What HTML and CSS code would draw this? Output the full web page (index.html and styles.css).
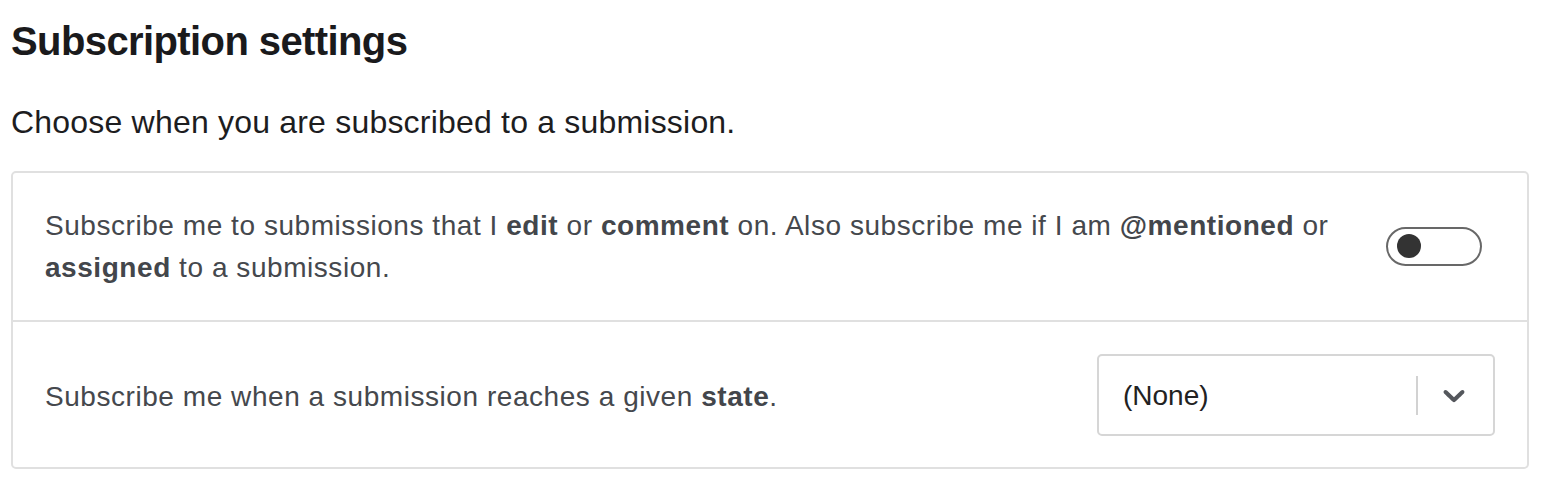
FILE: index.html
```html
<!DOCTYPE html>
<html>
  <head>
    <link rel="stylesheet" href="styles.css">
  </head>
  <body>
    <div class="page">
      <h1 class="title">Subscription settings</h1>
      <p class="intro">Choose when you are subscribed to a submission.</p>

      <div class="card">
        <div class="row">
          <div class="row-text">
            Subscribe me to submissions that I <b>edit</b> or <b>comment</b> on. Also subscribe me if I am <b>@mentioned</b> or <b>assigned</b> to a submission.
          </div>
          <div class="toggle">
            <span class="knob"></span>
          </div>
        </div>
        <div class="row">
          <div class="row-text row-text-low">
            Subscribe me when a submission reaches a given <b>state</b>.
          </div>
          <div class="select">
            <div class="select-value">(None)</div>
            <span class="select-sep"></span>
            <div class="select-arrow">
              <svg width="36" height="36" viewBox="0 0 20 20">
                <path d="M4.516 7.548c0.436-0.446 1.043-0.481 1.576 0l3.908 3.747 3.908-3.747c0.533-0.481 1.141-0.446 1.574 0 0.436 0.445 0.408 1.197 0 1.615-0.406 0.418-4.695 4.502-4.695 4.502-0.217 0.223-0.502 0.335-0.787 0.335s-0.57-0.112-0.789-0.335c0 0-4.287-4.084-4.695-4.502s-0.436-1.17 0-1.615z" fill="#54575c"/>
              </svg>
            </div>
          </div>
        </div>
      </div>
    </div>
  </body>
</html>
```

FILE: styles.css
```css
* {box-sizing: border-box;}

body {
  margin: 0;
  font-family: "Liberation Sans", Arial, sans-serif;
  background-color: #fff;
  color: #1d1d1f;
}

.page {
  width: 1529px;
  padding: 17px 0 0 11px;
}

.title {
  margin: 0;
  font-size: 40px;
  line-height: 48px;
  font-weight: bold;
  letter-spacing: -0.6px;
  color: #1a1a1c;
}

.intro {
  margin: 37px 0 29px;
  font-size: 32px;
  line-height: 40px;
  letter-spacing: 0.2px;
  color: #1d1d1f;
}

.card {
  border: 2px solid #e0e0e0;
  border-radius: 5px;
}

.row {
  display: flex;
  align-items: center;
  padding: 32px 32px 31px;
}

.row + .row {
  border-top: 2px solid #e0e0e0;
}

.row-text {
  flex: 1;
  font-size: 28px;
  line-height: 42px;
  letter-spacing: 0.55px;
  color: #45484d;
}

.row-text-low {
  padding-top: 4px;
}

.row-text b {
  color: #43464b;
}

.toggle {
  flex-shrink: 0;
  width: 96px;
  height: 39px;
  margin: 0 13px 2px 44px;
  border: 2px solid #686868;
  border-radius: 20px;
  display: flex;
  align-items: center;
  padding-left: 9px;
}

.knob {
  width: 24px;
  height: 24px;
  border-radius: 50%;
  background-color: #333;
}

.select {
  flex-shrink: 0;
  width: 398px;
  height: 82px;
  border: 2px solid #d6d6d6;
  border-radius: 5px;
  display: flex;
  align-items: center;
}

.select-value {
  flex: 1;
  padding: 2px 0 0 24px;
  font-size: 28px;
  color: #222;
}

.select-sep {
  width: 2px;
  height: 39px;
  background-color: #d2d2d2;
}

.select-arrow {
  width: 75px;
  padding-right: 3px;
  display: flex;
  justify-content: center;
  align-items: center;
}

.select-arrow svg {display: block;}
```
